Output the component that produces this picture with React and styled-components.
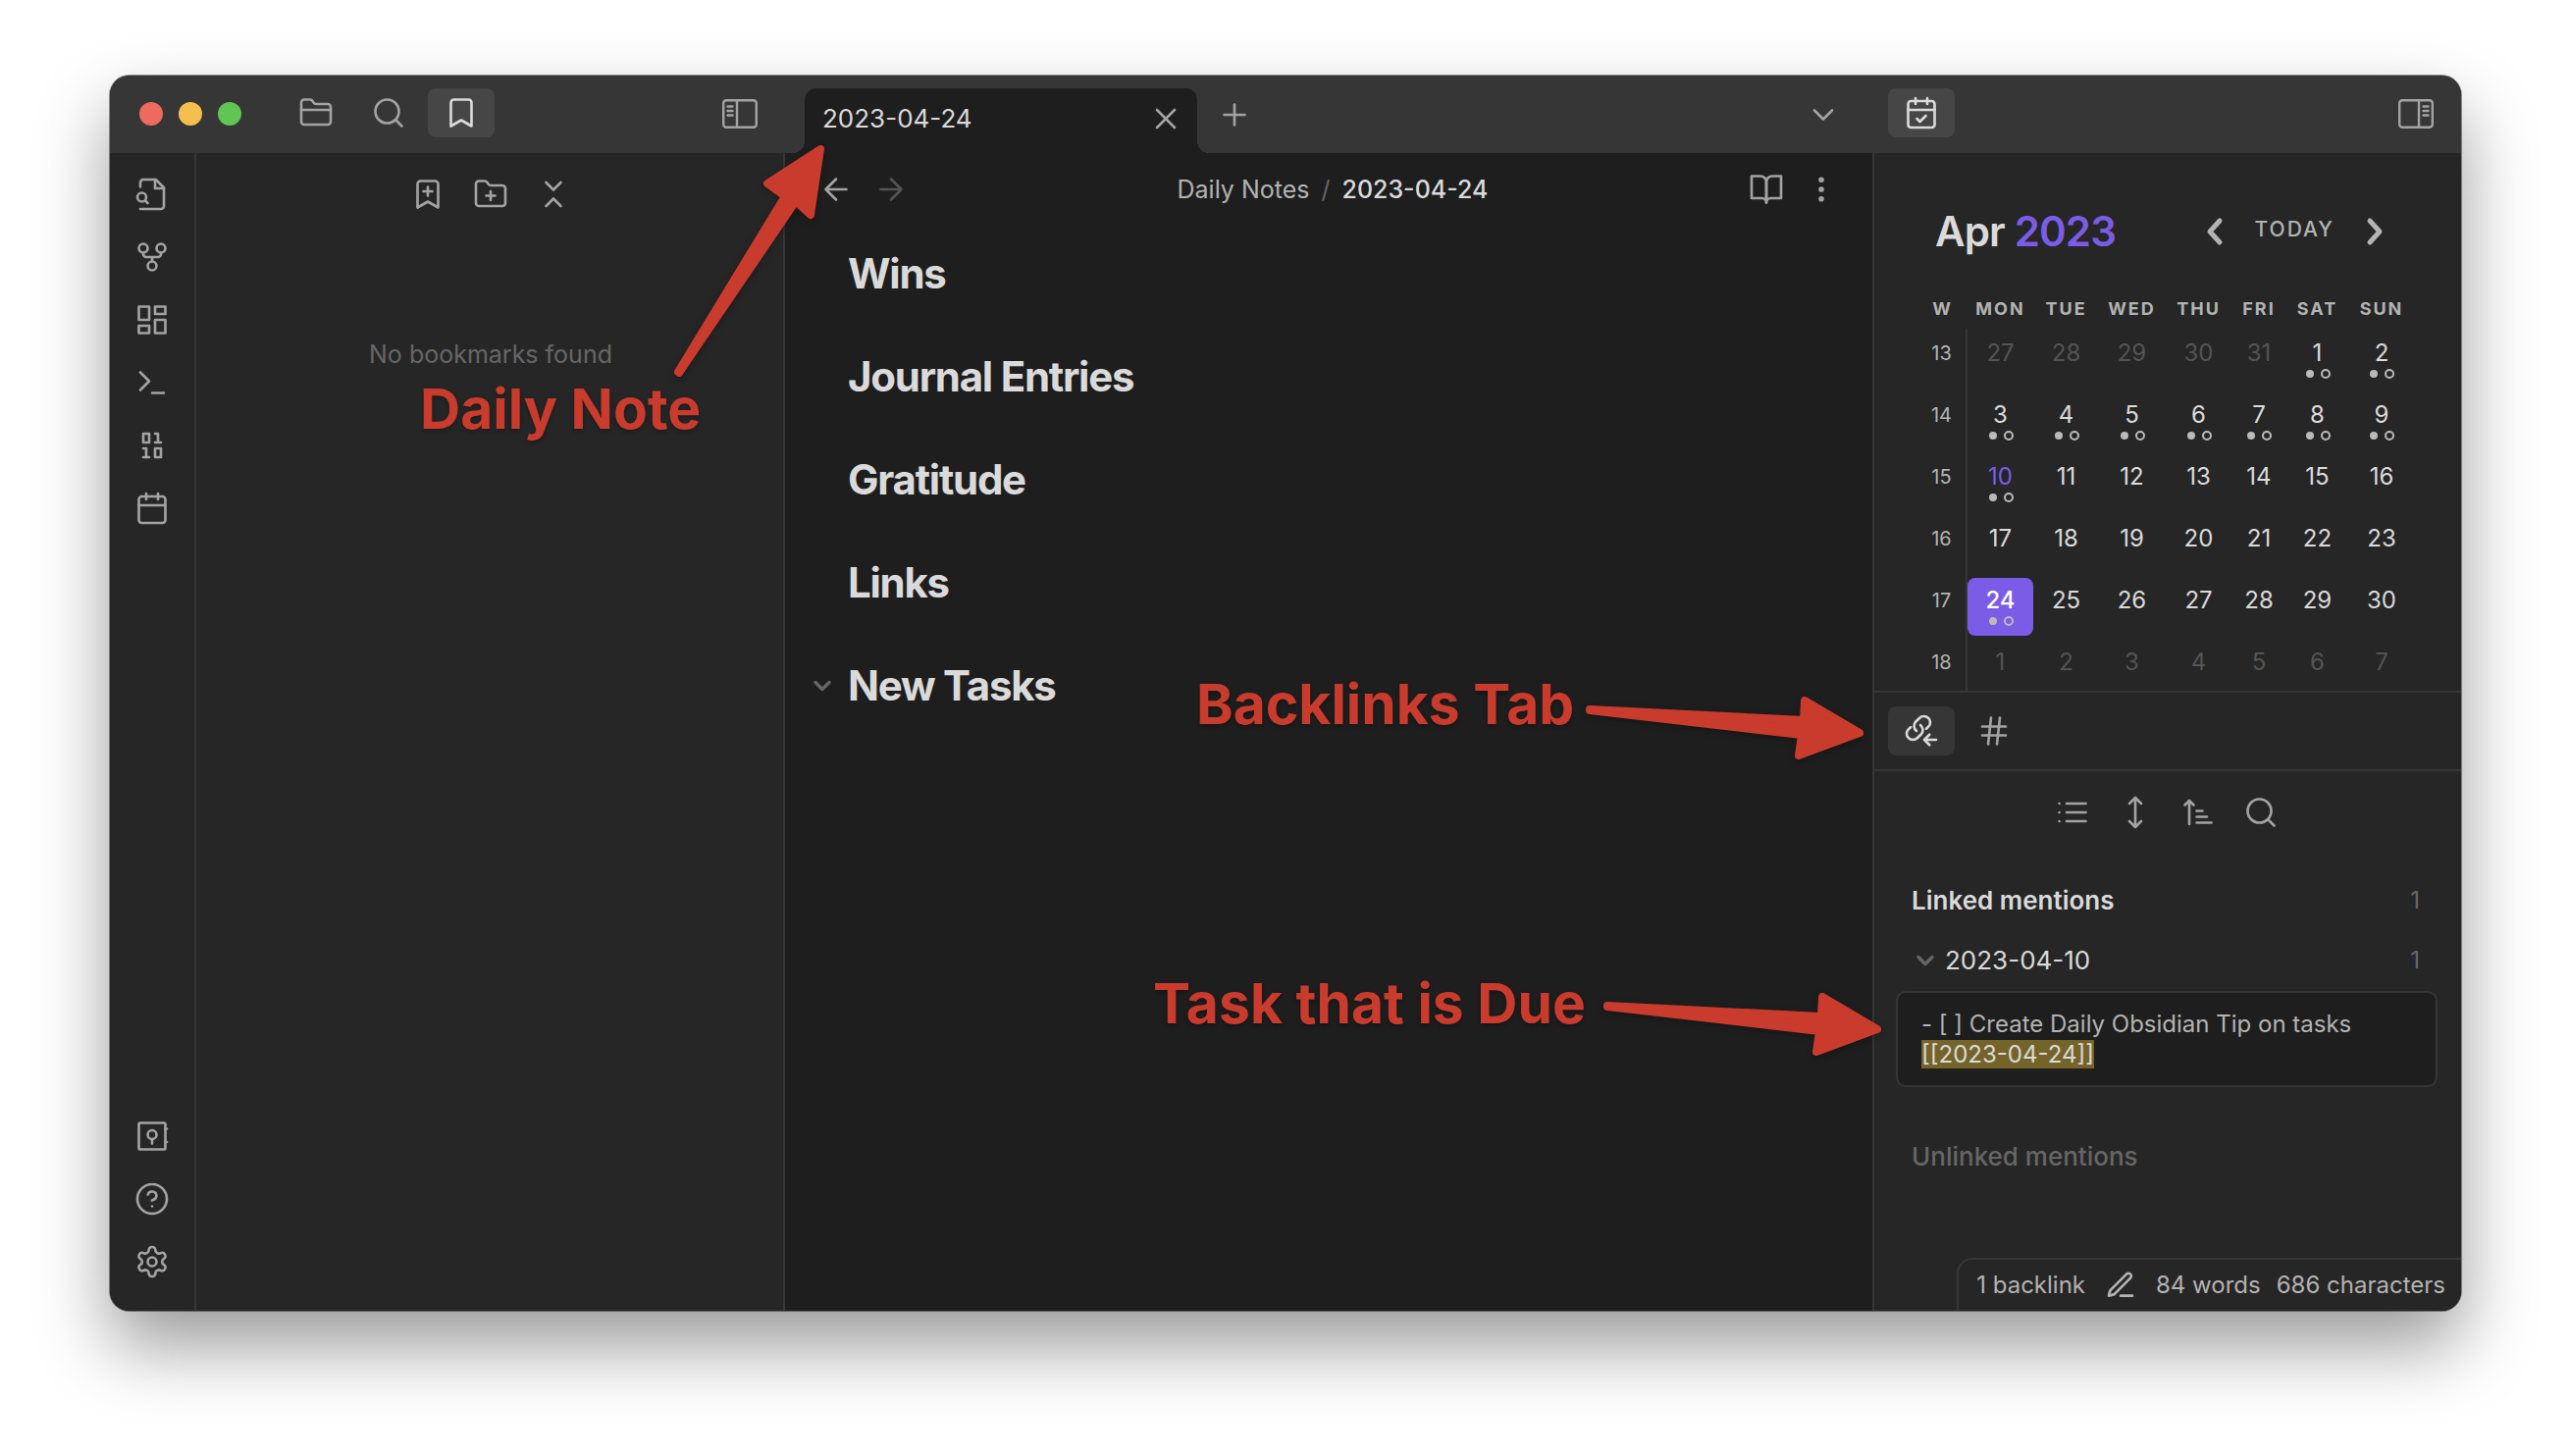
import React from "react";
import styled, { createGlobalStyle, css } from "styled-components";

const c = {
  page: "#ffffff",
  bar: "#363636",
  barActive: "#464646",
  side: "#262626",
  editor: "#1e1e1e",
  line: "#363636",
  text: "#dadada",
  muted: "#b3b3b3",
  icon: "#a3a3a3",
  faint: "#666666",
  dim: "#545454",
  accent: "#7a5ce6",
  mark: "#756429",
  red: "#c93b2c",
};

const GlobalStyle = createGlobalStyle`
  *, *::before, *::after { box-sizing: border-box; }
  body {
    margin: 0;
    background: ${c.page};
    color: ${c.text};
    font-family: Inter, "Liberation Sans", sans-serif;
    font-size: 26px;
    line-height: 36px;
  }
  button { font: inherit; color: inherit; background: none; border: 0; padding: 0; }
  h2, h3, p { margin: 0; font: inherit; }
  svg { display: block; flex: none; }
`;

const Desktop = styled.div`
  display: flex;
  height: 100vh;
  padding: 77px 112px 148px;
`;

const Window = styled.div`
  position: relative;
  flex: 1;
  min-width: 0;
  display: grid;
  grid-template-columns: 688px minmax(0, 1fr) 600px;
  grid-template-rows: 79px minmax(0, 1fr);
  border-radius: 20px;
  background: ${c.editor};
  box-shadow: 0 0 0 1px rgba(0, 0, 0, 0.4), 0 36px 74px rgba(0, 0, 0, 0.4);
`;

const BarSection = styled.header`
  display: flex;
  align-items: center;
  background: ${c.bar};
`;

const LeftBar = styled(BarSection)`
  padding: 0 28px 1px 30px;
  border-top-left-radius: 20px;
`;

const TabBar = styled(BarSection)`
  padding: 13px 32px 0 20px;
`;

const RightBar = styled(BarSection)`
  justify-content: space-between;
  padding: 0 28px 1px 16px;
  border-top-right-radius: 20px;
`;

const Lights = styled.div`
  display: flex;
  gap: 16px;
  margin-right: 42px;
`;

const Light = styled.span`
  width: 24px;
  height: 24px;
  border-radius: 50%;
  background: ${(p) => p.$color};
`;

const Tabs = styled.div`
  display: flex;
  gap: 6px;
  flex: 1;
  padding-bottom: 2px;
`;

const PaneTab = styled.button`
  display: grid;
  place-items: center;
  width: 68px;
  height: 50px;
  border-radius: 8px;
  color: ${(p) => (p.$on ? c.text : c.icon)};
  background: ${(p) => (p.$on ? p.$on : "transparent")};
`;

const IconButton = styled.button`
  display: grid;
  place-items: center;
  width: 52px;
  height: ${(p) => (p.$short ? "36px" : "52px")};
  color: ${(p) => (p.$dim ? c.dim : c.icon)};
`;

const ToggleButton = styled.button`
  display: grid;
  place-items: center;
  color: ${c.icon};
`;

const NoteTab = styled.div`
  position: relative;
  display: flex;
  align-items: center;
  justify-content: space-between;
  width: 400px;
  height: 66px;
  padding: 0 6px 4px 18px;
  border-radius: 12px 12px 0 0;
  background: ${c.editor};

  &::before,
  &::after {
    content: "";
    position: absolute;
    bottom: 0;
    width: 12px;
    height: 12px;
  }
  &::before {
    right: 100%;
    background: radial-gradient(circle at 0 0, transparent 12px, ${c.editor} 12px);
  }
  &::after {
    left: 100%;
    background: radial-gradient(circle at 100% 0, transparent 12px, ${c.editor} 12px);
  }
`;

const TabTools = styled.div`
  display: flex;
  flex: 1;
  justify-content: space-between;
  padding: 0 0 12px 12px;
  margin-right: -8px;
`;

const LeftSide = styled.aside`
  display: flex;
  background: ${c.side};
  border-right: 2px solid ${c.line};
  border-bottom-left-radius: 20px;
`;

const Ribbon = styled.nav`
  display: flex;
  flex-direction: column;
  justify-content: space-between;
  align-items: center;
  width: 88px;
  padding: 16px 0 24px;
  border-right: 2px solid ${c.line};
`;

const RibbonGroup = styled.div`
  display: flex;
  flex-direction: column;
  gap: 12px;
`;

const Bookmarks = styled.section`
  flex: 1;
  padding: 16px 0 0 2px;
`;

const Toolbar = styled.div`
  display: flex;
  justify-content: center;
  gap: 12px;
`;

const Empty = styled.p`
  margin-top: 119px;
  font-size: 25px;
  text-align: center;
  color: ${c.faint};
`;

const Editor = styled.main`
  min-width: 0;
`;

const ViewHeader = styled.div`
  display: grid;
  grid-template-columns: 1fr auto 1fr;
  align-items: center;
  height: 74px;
  padding: 0 26px;
`;

const Group = styled.div`
  display: flex;
  gap: 4px;
  justify-content: ${(p) => (p.$end ? "flex-end" : "flex-start")};
`;

const Crumbs = styled.div`
  display: flex;
  gap: 12px;
  padding-left: 8px;
  font-size: 25px;
  color: ${c.muted};

  i { font-style: normal; color: ${c.faint}; }
  b { font-weight: 500; color: ${c.text}; }
`;

const Note = styled.article`
  display: flex;
  flex-direction: column;
  gap: 53px;
  padding: 23px 20px 0;
`;

const HeadingRow = styled.div`
  display: grid;
  grid-template-columns: 36px 1fr;
  gap: 8px;
  align-items: center;
`;

const Heading = styled.h2`
  grid-column: 2;
  font-size: 42px;
  line-height: 52px;
  font-weight: 700;
  letter-spacing: -0.03em;
`;

const Fold = styled.button`
  display: grid;
  place-items: center;
  height: 52px;
  color: ${c.faint};
`;

const RightSide = styled.aside`
  position: relative;
  display: grid;
  grid-template-rows: minmax(0, 550fr) minmax(0, 630fr);
  background: ${c.side};
  border-left: 2px solid ${c.line};
  border-bottom-right-radius: 20px;
  overflow: hidden;
`;

const Calendar = styled.section`
  overflow: hidden;
  padding: 54px 48px 0 44px;
  border-bottom: 2px solid ${c.line};
`;

const CalendarNav = styled.div`
  display: flex;
  justify-content: space-between;
  align-items: center;
  padding: 0 31px 0 18px;
  margin-bottom: 33px;
`;

const Month = styled.h3`
  font-size: 42px;
  line-height: 52px;
  font-weight: 600;
  letter-spacing: -0.02em;

  span { color: ${c.accent}; }
`;

const NavGroup = styled.div`
  display: flex;
  align-items: center;
  gap: 32px;
  color: ${c.muted};
`;

const Today = styled.button`
  font-size: 21px;
  line-height: 28px;
  font-weight: 500;
  letter-spacing: 2px;
  padding-bottom: 4px;
`;

const Days = styled.table`
  width: 100%;
  table-layout: fixed;
  border-collapse: separate;
  border-spacing: 0;

  th, td { padding: 0; text-align: center; vertical-align: top; }
`;

const DayName = styled.th`
  height: 40px;
  font-size: 18px;
  line-height: 40px;
  font-weight: 700;
  letter-spacing: 2px;
  color: ${c.muted};
`;

const WeekCell = styled.th`
  height: 63px;
  border-right: 2px solid ${c.line};
  font-size: 20px;
  line-height: 50px;
  font-weight: 400;
  color: ${c.muted};
`;

const Day = styled.button`
  display: flex;
  flex-direction: column;
  align-items: center;
  gap: 2px;
  width: 100%;
  height: 59px;
  margin: 2px 0;
  padding-top: 9px;
  border-radius: 8px;
  font-size: 24px;
  line-height: 28px;
  color: ${c.text};
  ${(p) => p.$kind === "out" && css`color: ${c.dim};`}
  ${(p) => p.$kind === "today" && css`color: ${c.accent};`}
  ${(p) => p.$kind === "active" && css`color: #ffffff; font-weight: 500; background: ${c.accent};`}
`;

const Lower = styled.section`
  min-width: 0;
`;

const LowerTabs = styled.div`
  display: flex;
  gap: 6px;
  padding: 14px;
  border-bottom: 2px solid ${c.line};
`;

const Results = styled.div`
  padding: 16px 24px 0 22px;
`;

const ResultRow = styled.div`
  display: flex;
  justify-content: space-between;
  align-items: center;
  padding: 0 18px 0 16px;
  margin-top: ${(p) => p.$gap}px;
  font-weight: ${(p) => p.$weight || 400};
  color: ${(p) => (p.$faint ? c.faint : c.text)};
`;

const Count = styled.span`
  font-size: 24px;
  font-weight: 400;
  color: ${c.faint};
`;

const FileToggle = styled.button`
  display: flex;
  align-items: center;
  gap: 6px;

  svg { color: ${c.faint}; }
`;

const Match = styled.p`
  margin-top: 13px;
  padding: 16px 24px;
  border: 2px solid ${c.line};
  border-radius: 10px;
  background: ${c.editor};
  font-size: 24px;
  line-height: 31px;
  color: ${c.muted};

  mark { background: ${c.mark}; color: ${c.text}; }
`;

const StatusBar = styled.footer`
  position: absolute;
  right: 0;
  bottom: 0;
  display: flex;
  align-items: center;
  gap: 16px;
  height: 54px;
  padding: 0 16px 0 18px;
  border: solid ${c.line};
  border-width: 2px 0 0 2px;
  border-top-left-radius: 16px;
  background: ${c.side};
  font-size: 24px;
  color: ${c.muted};

  button { padding: 0 4px; }
`;

const Callout = styled.strong`
  position: absolute;
  left: ${(p) => p.$x}px;
  top: ${(p) => p.$y}px;
  font-size: 57px;
  line-height: 70px;
  font-weight: 700;
  white-space: nowrap;
  color: ${c.red};
  text-shadow: 0 2px 4px rgba(0, 0, 0, 0.3);
`;

const Pointer = styled.svg`
  position: absolute;
  left: ${(p) => p.$x}px;
  top: ${(p) => p.$y}px;
  overflow: visible;
  fill: ${c.red};
  stroke: ${c.red};
  stroke-width: 8;
  stroke-linejoin: round;
  filter: drop-shadow(0 2px 3px rgba(0, 0, 0, 0.3));
`;

const shapes = {
  folder: <><path d="M4 20h16a2 2 0 0 0 2-2V8a2 2 0 0 0-2-2h-7.93a2 2 0 0 1-1.66-.9l-.82-1.2A2 2 0 0 0 7.93 3H4a2 2 0 0 0-2 2v13c0 1.1.9 2 2 2Z" /><path d="M2 10h20" /></>,
  folderPlus: <><path d="M4 20h16a2 2 0 0 0 2-2V8a2 2 0 0 0-2-2h-7.93a2 2 0 0 1-1.66-.9l-.82-1.2A2 2 0 0 0 7.93 3H4a2 2 0 0 0-2 2v13c0 1.1.9 2 2 2Z" /><path d="M12 10v6M9 13h6" /></>,
  search: <><circle cx="11" cy="11" r="8" /><path d="m21 21-4.3-4.3" /></>,
  bookmark: <path d="m19 21-7-4-7 4V5a2 2 0 0 1 2-2h10a2 2 0 0 1 2 2v16z" />,
  bookmarkPlus: <><path d="m19 21-7-4-7 4V5a2 2 0 0 1 2-2h10a2 2 0 0 1 2 2v16z" /><path d="M12 7v6M15 10H9" /></>,
  collapse: <path d="m7 20 5-5 5 5M7 4l5 5 5-5" />,
  close: <path d="M18 6 6 18M6 6l12 12" />,
  plus: <path d="M12 5v14M5 12h14" />,
  chevron: <path d="m6 9 6 6 6-6" />,
  fileSearch: <><path d="M4 22h14a2 2 0 0 0 2-2V7.5L14.5 2H6a2 2 0 0 0-2 2v3" /><path d="M14 2v6h6" /><path d="M5 17a3 3 0 1 0 0-6 3 3 0 0 0 0 6Z" /><path d="m9 18-1.5-1.5" /></>,
  fork: <><circle cx="12" cy="18" r="3" /><circle cx="6" cy="6" r="3" /><circle cx="18" cy="6" r="3" /><path d="M18 9v1a2 2 0 0 1-2 2H8a2 2 0 0 1-2-2V9M12 12v3" /></>,
  dashboard: <path d="M3 3h7v9H3zM14 3h7v5h-7zM14 12h7v9h-7zM3 16h7v5H3z" />,
  terminal: <path d="m4 17 6-6-6-6M12 19h8" />,
  binary: <><path d="M6 4h4v6H6zM14 14h4v6h-4z" /><path d="M6 20h4M14 10h4M6 14h2v6M14 4h2v6" /></>,
  calendar: <><rect x="3" y="4" width="18" height="18" rx="2" /><path d="M16 2v4M8 2v4M3 10h18" /></>,
  calendarCheck: <><rect x="3" y="4" width="18" height="18" rx="2" /><path d="M16 2v4M8 2v4M3 10h18M9 16l2 2 4-4" /></>,
  vault: <><rect x="3" y="3" width="18" height="18" rx="1" /><circle cx="12" cy="11" r="3" /><path d="M12 14v3M21 7h1M21 16h1" /></>,
  help: <><circle cx="12" cy="12" r="10" /><path d="M9.09 9a3 3 0 0 1 5.83 1c0 2-3 3-3 3M12 17h.01" /></>,
  settings: <><path d="M12.22 2h-.44a2 2 0 0 0-2 2v.18a2 2 0 0 1-1 1.73l-.43.25a2 2 0 0 1-2 0l-.15-.08a2 2 0 0 0-2.73.73l-.22.38a2 2 0 0 0 .73 2.73l.15.1a2 2 0 0 1 1 1.72v.51a2 2 0 0 1-1 1.74l-.15.09a2 2 0 0 0-.73 2.73l.22.38a2 2 0 0 0 2.73.73l.15-.08a2 2 0 0 1 2 0l.43.25a2 2 0 0 1 1 1.73V20a2 2 0 0 0 2 2h.44a2 2 0 0 0 2-2v-.18a2 2 0 0 1 1-1.73l.43-.25a2 2 0 0 1 2 0l.15.08a2 2 0 0 0 2.73-.73l.22-.39a2 2 0 0 0-.73-2.73l-.15-.08a2 2 0 0 1-1-1.74v-.5a2 2 0 0 1 1-1.74l.15-.09a2 2 0 0 0 .73-2.73l-.22-.38a2 2 0 0 0-2.73-.73l-.15.08a2 2 0 0 1-2 0l-.43-.25a2 2 0 0 1-1-1.73V4a2 2 0 0 0-2-2z" /><circle cx="12" cy="12" r="3" /></>,
  back: <path d="m12 19-7-7 7-7M19 12H5" />,
  forward: <path d="M5 12h14M12 5l7 7-7 7" />,
  book: <><path d="M2 3h6a4 4 0 0 1 4 4v14a3 3 0 0 0-3-3H2z" /><path d="M22 3h-6a4 4 0 0 0-4 4v14a3 3 0 0 1 3-3h7z" /></>,
  more: <><circle cx="12" cy="12" r="1" /><circle cx="12" cy="5.5" r="1" /><circle cx="12" cy="18.5" r="1" /></>,
  backlinks: <><path d="M8.7 12a4.2 4.2 0 0 1-.46-6.31l2.56-2.51a4.3 4.3 0 0 1 5.96.05 4.1 4.1 0 0 1 .05 5.86L15.3 10.5" /><path d="M11.3 8a4.2 4.2 0 0 1 .45 6.31L9.2 16.82a4.3 4.3 0 0 1-5.96-.05 4.1 4.1 0 0 1-.05-5.86L4.7 9.5" /><path d="M22 18h-8M17.5 14.5 14 18l3.5 3.5" /></>,
  hash: <path d="M4 9h16M4 15h16M10 3 8 21M16 3l-2 18" />,
  list: <path d="M8 6h13M8 12h13M8 18h13M3 6h.01M3 12h.01M3 18h.01" />,
  expand: <path d="m8 18 4 4 4-4M8 6l4-4 4 4M12 2v20" />,
  sort: <path d="M11 11h4M11 15h7M11 19h10M9 7 6 4 3 7M6 4v16" />,
  pencil: <path d="M12 20h9M16.5 3.5a2.12 2.12 0 0 1 3 3L7 19l-4 1 1-4Z" />,
};

function Icon({ name, size = 36, weight = 1.75 }) {
  return (
    <svg width={size} height={size} viewBox="0 0 24 24" fill="none" stroke="currentColor" strokeWidth={weight} strokeLinecap="round" strokeLinejoin="round" aria-hidden="true">
      {shapes[name]}
    </svg>
  );
}

function SidebarIcon({ right }) {
  return (
    <svg width="36" height="30" viewBox="0 0 36 30" fill="none" stroke="currentColor" strokeWidth="2.4" strokeLinecap="round" aria-hidden="true">
      <rect x="1.2" y="1.2" width="33.6" height="27.6" rx="3" />
      {right ? <path d="M21 1.5v27M25.5 7.5h5M25.5 12h5M25.5 16.5h5" /> : <path d="M15 1.5v27M5.5 7.5h5M5.5 12h5M5.5 16.5h5" />}
    </svg>
  );
}

function Arrow({ flip }) {
  return (
    <svg width="18" height="30" viewBox="0 0 18 30" fill="none" stroke="currentColor" strokeWidth="5" strokeLinecap="round" strokeLinejoin="round" aria-hidden="true">
      <path d={flip ? "M4 4l10 11L4 26" : "M14 4 4 15l10 11"} />
    </svg>
  );
}

function Dots() {
  return (
    <svg width="26" height="10" viewBox="0 0 26 10" aria-hidden="true">
      <circle cx="5" cy="5" r="4" fill="#bababa" />
      <circle cx="21" cy="5" r="4" fill="none" stroke="#bababa" strokeWidth="2" />
    </svg>
  );
}

const ribbonTop = [
  ["fileSearch", "Open quick switcher"],
  ["fork", "Open graph view"],
  ["dashboard", "Create new canvas"],
  ["terminal", "Open command palette"],
  ["binary", "Convert"],
  ["calendar", "Open today's daily note"],
];
const ribbonBottom = [
  ["vault", "Open another vault"],
  ["help", "Help"],
  ["settings", "Settings"],
];
const sections = ["Wins", "Journal Entries", "Gratitude", "Links", "New Tasks"];
const columns = [51, 67, 67, 67, 69, 54, 65, 66];
const dayNames = ["W", "MON", "TUE", "WED", "THU", "FRI", "SAT", "SUN"];
const weeks = [
  [13, [27, 28, 29, 30, 31, 1, 2]],
  [14, [3, 4, 5, 6, 7, 8, 9]],
  [15, [10, 11, 12, 13, 14, 15, 16]],
  [16, [17, 18, 19, 20, 21, 22, 23]],
  [17, [24, 25, 26, 27, 28, 29, 30]],
  [18, [1, 2, 3, 4, 5, 6, 7]],
];

function dayState(week, day) {
  const out = (week === 13 && day > 20) || week === 18;
  const kind = out ? "out" : day === 10 ? "today" : day === 24 ? "active" : "in";
  return { kind, noted: !out && (day <= 10 || day === 24) };
}

export default function App() {
  return (
    <>
      <GlobalStyle />
      <Desktop>
        <Window>
          <LeftBar>
            <Lights>
              <Light $color="#ec6a5e" />
              <Light $color="#f5bf4f" />
              <Light $color="#61c554" />
            </Lights>
            <Tabs>
              <PaneTab aria-label="Files"><Icon name="folder" /></PaneTab>
              <PaneTab aria-label="Search"><Icon name="search" /></PaneTab>
              <PaneTab aria-label="Bookmarks" $on={c.barActive}><Icon name="bookmark" /></PaneTab>
            </Tabs>
            <ToggleButton aria-label="Toggle left sidebar"><SidebarIcon /></ToggleButton>
          </LeftBar>
          <TabBar>
            <NoteTab>
              <span>2023-04-24</span>
              <IconButton $short aria-label="Close tab"><Icon name="close" /></IconButton>
            </NoteTab>
            <TabTools>
              <IconButton $short aria-label="New tab"><Icon name="plus" /></IconButton>
              <IconButton $short aria-label="Tab list"><Icon name="chevron" /></IconButton>
            </TabTools>
          </TabBar>
          <RightBar>
            <Tabs>
              <PaneTab aria-label="Calendar" $on={c.barActive}><Icon name="calendarCheck" /></PaneTab>
            </Tabs>
            <ToggleButton aria-label="Toggle right sidebar"><SidebarIcon right /></ToggleButton>
          </RightBar>

          <LeftSide>
            <Ribbon>
              <RibbonGroup>
                {ribbonTop.map(([name, label]) => (
                  <IconButton key={name} aria-label={label}><Icon name={name} /></IconButton>
                ))}
              </RibbonGroup>
              <RibbonGroup>
                {ribbonBottom.map(([name, label]) => (
                  <IconButton key={name} aria-label={label}><Icon name={name} /></IconButton>
                ))}
              </RibbonGroup>
            </Ribbon>
            <Bookmarks>
              <Toolbar>
                <IconButton aria-label="Bookmark"><Icon name="bookmarkPlus" /></IconButton>
                <IconButton aria-label="New group"><Icon name="folderPlus" /></IconButton>
                <IconButton aria-label="Collapse all"><Icon name="collapse" /></IconButton>
              </Toolbar>
              <Empty>No bookmarks found</Empty>
            </Bookmarks>
          </LeftSide>

          <Editor>
            <ViewHeader>
              <Group>
                <IconButton aria-label="Back"><Icon name="back" /></IconButton>
                <IconButton aria-label="Forward" $dim><Icon name="forward" /></IconButton>
              </Group>
              <Crumbs><span>Daily Notes</span><i>/</i><b>2023-04-24</b></Crumbs>
              <Group $end>
                <IconButton aria-label="Reading view"><Icon name="book" /></IconButton>
                <IconButton aria-label="More options"><Icon name="more" /></IconButton>
              </Group>
            </ViewHeader>
            <Note>
              {sections.map((title) => (
                <HeadingRow key={title}>
                  {title === "New Tasks" && (
                    <Fold aria-label="Fold section"><Icon name="chevron" size={28} weight={3} /></Fold>
                  )}
                  <Heading>{title}</Heading>
                </HeadingRow>
              ))}
            </Note>
          </Editor>

          <RightSide>
            <Calendar>
              <CalendarNav>
                <Month>Apr <span>2023</span></Month>
                <NavGroup>
                  <button aria-label="Previous month"><Arrow /></button>
                  <Today>TODAY</Today>
                  <button aria-label="Next month"><Arrow flip /></button>
                </NavGroup>
              </CalendarNav>
              <Days>
                <colgroup>
                  {columns.map((w, i) => <col key={i} width={w} />)}
                </colgroup>
                <thead>
                  <tr>{dayNames.map((d) => <DayName key={d} scope="col">{d}</DayName>)}</tr>
                </thead>
                <tbody>
                  {weeks.map(([week, days]) => (
                    <tr key={week}>
                      <WeekCell scope="row">{week}</WeekCell>
                      {days.map((day) => {
                        const { kind, noted } = dayState(week, day);
                        return (
                          <td key={day}>
                            <Day $kind={kind}>{day}{noted && <Dots />}</Day>
                          </td>
                        );
                      })}
                    </tr>
                  ))}
                </tbody>
              </Days>
            </Calendar>
            <Lower>
              <LowerTabs>
                <PaneTab aria-label="Backlinks" $on={c.bar}><Icon name="backlinks" /></PaneTab>
                <PaneTab aria-label="Tags"><Icon name="hash" /></PaneTab>
              </LowerTabs>
              <Results>
                <Toolbar>
                  <IconButton aria-label="Collapse results"><Icon name="list" /></IconButton>
                  <IconButton aria-label="Show more context"><Icon name="expand" /></IconButton>
                  <IconButton aria-label="Change sort order"><Icon name="sort" /></IconButton>
                  <IconButton aria-label="Show search filter"><Icon name="search" /></IconButton>
                </Toolbar>
                <ResultRow $gap={46} $weight={600}>Linked mentions<Count>1</Count></ResultRow>
                <ResultRow $gap={25}>
                  <FileToggle><Icon name="chevron" size={28} weight={3} />2023-04-10</FileToggle>
                  <Count>1</Count>
                </ResultRow>
                <Match>- [ ] Create Daily Obsidian Tip on tasks<br /><mark>[[2023-04-24]]</mark></Match>
                <ResultRow $gap={53} $weight={500} $faint>Unlinked mentions</ResultRow>
              </Results>
            </Lower>
            <StatusBar>
              <span>1 backlink</span>
              <button aria-label="Editing mode"><Icon name="pencil" size={32} weight={2} /></button>
              <span>84 words</span>
              <span>686 characters</span>
            </StatusBar>
          </RightSide>

          <Callout $x={316} $y={305}>Daily Note</Callout>
          <Callout $x={1107} $y={606}>Backlinks Tab</Callout>
          <Callout $x={1063} $y={911}>Task that is Due</Callout>
          <Pointer $x={575} $y={72} width="152" height="234" viewBox="0 0 152 234" aria-hidden="true">
            <path d="M149 3 95 38l18 13L4 230l1 1L124 56l15 14Z" />
          </Pointer>
          <Pointer $x={1503} $y={632} width="285" height="66" viewBox="0 0 285 66" aria-hidden="true">
            <path d="M280 38 224 5l-1 20L5 14v1l216 25-3 21Z" />
          </Pointer>
          <Pointer $x={1521} $y={934} width="285" height="66" viewBox="0 0 285 66" aria-hidden="true">
            <path d="M280 38 224 5l-1 20L5 14v1l216 25-3 21Z" />
          </Pointer>
        </Window>
      </Desktop>
    </>
  );
}
